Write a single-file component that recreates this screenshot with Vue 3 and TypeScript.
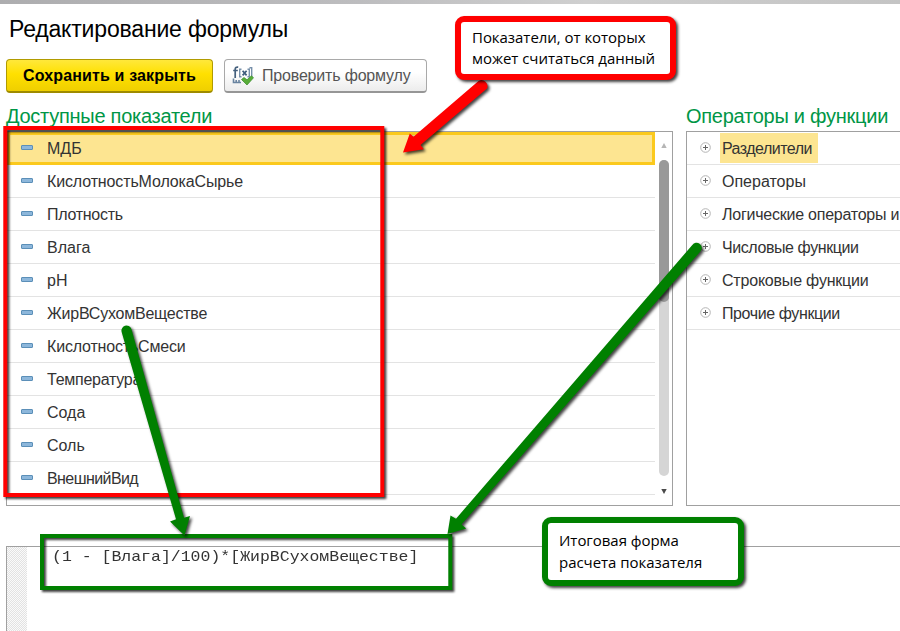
<script setup lang="ts">
interface Entry {
  name: string
  tracking: number
  selected?: boolean
}

const indicators: Entry[] = [
  { name: 'МДБ', tracking: 0, selected: true },
  { name: 'КислотностьМолокаСырье', tracking: -0.13 },
  { name: 'Плотность', tracking: -0.28 },
  { name: 'Влага', tracking: 0 },
  { name: 'pH', tracking: 0 },
  { name: 'ЖирВСухомВеществе', tracking: -0.23 },
  { name: 'КислотностьСмеси', tracking: -0.18 },
  { name: 'Температура', tracking: -0.25 },
  { name: 'Сода', tracking: 0 },
  { name: 'Соль', tracking: 0 },
  { name: 'ВнешнийВид', tracking: -0.58 },
]

const groups: Entry[] = [
  { name: 'Разделители', tracking: -0.52, selected: true },
  { name: 'Операторы', tracking: 0 },
  { name: 'Логические операторы и', tracking: -0.24 },
  { name: 'Числовые функции', tracking: -0.42 },
  { name: 'Строковые функции', tracking: -0.2 },
  { name: 'Прочие функции', tracking: -0.4 },
]

const spacing = (e: Entry) => ({ letterSpacing: `${e.tracking}px` })
</script>

<template>
  <main class="window">
    <div class="strip"></div>
    <h1 class="title">Редактирование формулы</h1>
    <div class="toolbar">
      <button class="btn primary"><span>Сохранить и закрыть</span></button>
      <button class="btn check">
        <svg width="22" height="22" viewBox="0 0 22 22">
          <path d="M3.2 13V4.2Q3.2 1.8 6.2 2.2M1.2 5.5h4.6" fill="none" stroke="#45607d" stroke-width="1.7" />
          <path d="M9.5 4.2H7.7v7.6h1.8M15.5 4.2h1.8v7.6h-1.8M17.5 2.8h2.2v9" fill="none" stroke="#7790aa" stroke-width="1.4" />
          <path d="M10.6 5.8l4 4.6m0-4.6l-4 4.6" fill="none" stroke="#3f5c7c" stroke-width="1.7" />
          <path d="M1.5 13.5v4H9M4.2 17v-2M7 17v-2" fill="none" stroke="#6984a0" stroke-width="1.6" />
          <path d="M9.5 14.5l2.5-2 3 2.3 4.5-4 2 2-6.5 7.2z" fill="#59ad39" stroke="#36892a" stroke-width=".7" />
        </svg>
        <span>Проверить формулу</span>
      </button>
    </div>

    <div class="columns">
      <section class="left">
        <h2>Доступные показатели</h2>
        <div class="panel list">
          <ul>
            <li v-for="item in indicators" :key="item.name" :class="{ selected: item.selected }">
              <i class="dash"></i><span :style="spacing(item)">{{ item.name }}</span>
            </li>
          </ul>
          <div class="scroll">
            <svg width="6" height="5" viewBox="0 0 6 5"><path d="M3 0l2.7 5H.3z" fill="#b5b5b5" /></svg>
            <div class="track"><div class="thumb"></div></div>
            <svg width="6" height="5" viewBox="0 0 6 5"><path d="M3 5L.3 0h5.4z" fill="#4a4a4a" /></svg>
          </div>
        </div>
      </section>
      <section class="right">
        <h2>Операторы и функции</h2>
        <div class="panel tree">
          <ul>
            <li v-for="g in groups" :key="g.name" :class="{ marked: g.selected }">
              <svg width="11" height="11" viewBox="0 0 11 11">
                <circle cx="5.5" cy="5.5" r="4.8" fill="#fff" stroke="#b4b4b4" />
                <path d="M3 5.5h5M5.5 3v5" stroke="#666" />
              </svg>
              <span :style="spacing(g)">{{ g.name }}</span>
            </li>
          </ul>
        </div>
      </section>
    </div>

    <section class="editor">
      <div class="gutter"></div>
      <code>(1 - [Влага]/100)*[ЖирВСухомВеществе]</code>
    </section>

    <svg class="marks" width="900" height="631" viewBox="0 0 900 631">
      <rect class="frame" x="5.3" y="128" width="377" height="367" stroke="#f00" />
      <rect class="frame" x="42" y="536" width="408.3" height="52" stroke="#008000" />
      <path class="arrow" fill="#f00" d="M403 152.5L409.8 133.5L413.5 136.8L478.5 81A6 6 0 0 1 487 88.5L420.5 145L423.8 149.3Z" />
      <path class="arrow" fill="#008000" d="M121.7 332.3A5 5 0 0 1 131.4 329L184 517.8L190 516L184.5 535.5L170 521.5L176 519.2Z" />
      <path class="arrow" fill="#008000" d="M447.5 534L450.5 515.5L456 518.7L692.3 245A5 5 0 0 1 700.8 251L461.5 524.5L466.2 528.5Z" />
    </svg>
    <aside class="note red"><p>Показатели, от которых</p><p>может считаться данный</p></aside>
    <aside class="note green"><p>Итоговая форма</p><p>расчета показателя</p></aside>
  </main>
</template>

<style>
body { margin: 0; background: #fff; }
</style>

<style scoped>
* { box-sizing: border-box; }
.window {
  position: relative;
  width: 900px;
  height: 631px;
  overflow: hidden;
  display: flex;
  flex-direction: column;
  background: #fff;
  font-family: "Liberation Sans", Arial, sans-serif;
  color: #333;
}
.strip { flex: none; height: 4px; background: linear-gradient(90deg, #adadaf, #bdbdbf 40%, #cfcfcf 65%, #c4c4c4); }
h1, h2, p, ul { margin: 0; padding: 0; font-weight: normal; }
.title { flex: none; height: 55px; padding: 0 0 0 9px; font-size: 23px; line-height: 51px; letter-spacing: -.18px; color: #000; white-space: nowrap; }
.toolbar { flex: none; display: flex; gap: 11px; padding-left: 6px; height: 34px; }
.btn {
  display: flex;
  align-items: center;
  justify-content: center;
  height: 34px;
  padding: 0;
  border-radius: 4px;
  font: 16px "Liberation Sans", Arial, sans-serif;
  white-space: nowrap;
}
.btn svg { flex: none; }
.primary {
  width: 207px;
  border: 1px solid #b19b00;
  border-bottom: 2px solid #9e8b00;
  background: linear-gradient(#ffe83b, #ffe000 45%, #efcf00);
  color: #000;
  font-weight: bold;
  letter-spacing: .14px;
}
.check {
  width: 203px;
  justify-content: flex-start;
  gap: 8px;
  padding-left: 7px;
  border: 1px solid #a9a9a9;
  border-bottom: 2px solid #969696;
  background: linear-gradient(#fff 40%, #ececec);
  color: #555;
  letter-spacing: -.18px;
}
.columns { flex: none; display: flex; gap: 13px; padding-left: 6px; height: 413px; }
.left { width: 667px; flex: none; }
.right { width: 215px; flex: none; overflow: hidden; }
h2 { height: 38px; padding-top: 11px; font-size: 20px; line-height: 24px; letter-spacing: -.26px; color: #009646; white-space: nowrap; }
.panel { height: 375px; border: 1px solid #a0a0a0; }
.list { display: flex; }
ul { list-style: none; }
.list ul { width: 648px; }
li { display: flex; align-items: center; height: 33px; border-bottom: 1px solid #e3e3e3; font-size: 16px; white-space: nowrap; }
.list li { padding-left: 14px; gap: 14px; }
.list li:not(.selected) span { padding-top: 2px; }
.list li.selected { border: 3px solid #fbc91d; padding-left: 11px; background: #fde591; }
.dash { width: 12px; height: 5px; border: 1px solid #5b8fb8; border-radius: 1px; background: #8db7db; margin-bottom: 2px; }
.scroll { width: 17px; display: flex; flex-direction: column; align-items: center; padding-top: 11px; }
.track { margin: 12px 0 13px; height: 316px; width: 10px; border-radius: 5px; background: #d5d5d5; }
.thumb { height: 142px; border-radius: 5px; background: #999; }
.tree { border-right: 0; }
.tree li { padding-left: 13px; gap: 9px; }
.tree li svg { flex: none; margin-bottom: 1px; }
.tree li span { padding: 2px 6px 0 2px; line-height: 28px; }
.marked span { background: #fde591; }
.editor { flex: none; display: flex; margin: 40px 0 0 6px; height: 100px; border: 1px solid #a0a0a0; border-right: 0; }
.gutter { width: 20px; background: repeating-conic-gradient(#e2e2e2 0 25%, #fafafa 0 50%) 0 0 / 2px 2px; }
code {
  margin-left: 25px;
  height: 20px;
  font: 15px/21px "Liberation Mono", "Courier New", monospace;
  white-space: pre;
  transform: scaleX(1.1);
  transform-origin: left;
}
.marks { position: absolute; left: 0; top: 0; }
.frame { fill: none; stroke-width: 4; filter: drop-shadow(2px 2px 1.3px rgba(0, 0, 0, .75)); }
.arrow { filter: drop-shadow(2px 2px 1.5px rgba(0, 0, 0, .75)); }
.note {
  position: absolute;
  border: 6px solid;
  border-radius: 9px;
  background: #fff;
  box-shadow: 2px 2px 3px rgba(0, 0, 0, .75);
  font: 15px/21px "Open Sans", "Noto Sans", sans-serif;
  letter-spacing: -.04px;
  white-space: nowrap;
}
.note p { color: #000; }
.red { left: 455px; top: 16px; width: 221px; height: 64px; border-color: #f00; padding: 5px 0 0 11px; }
.green { left: 542px; top: 517px; width: 202px; height: 69px; border-color: #008000; padding: 6px 0 0 11px; line-height: 22px; }
</style>
